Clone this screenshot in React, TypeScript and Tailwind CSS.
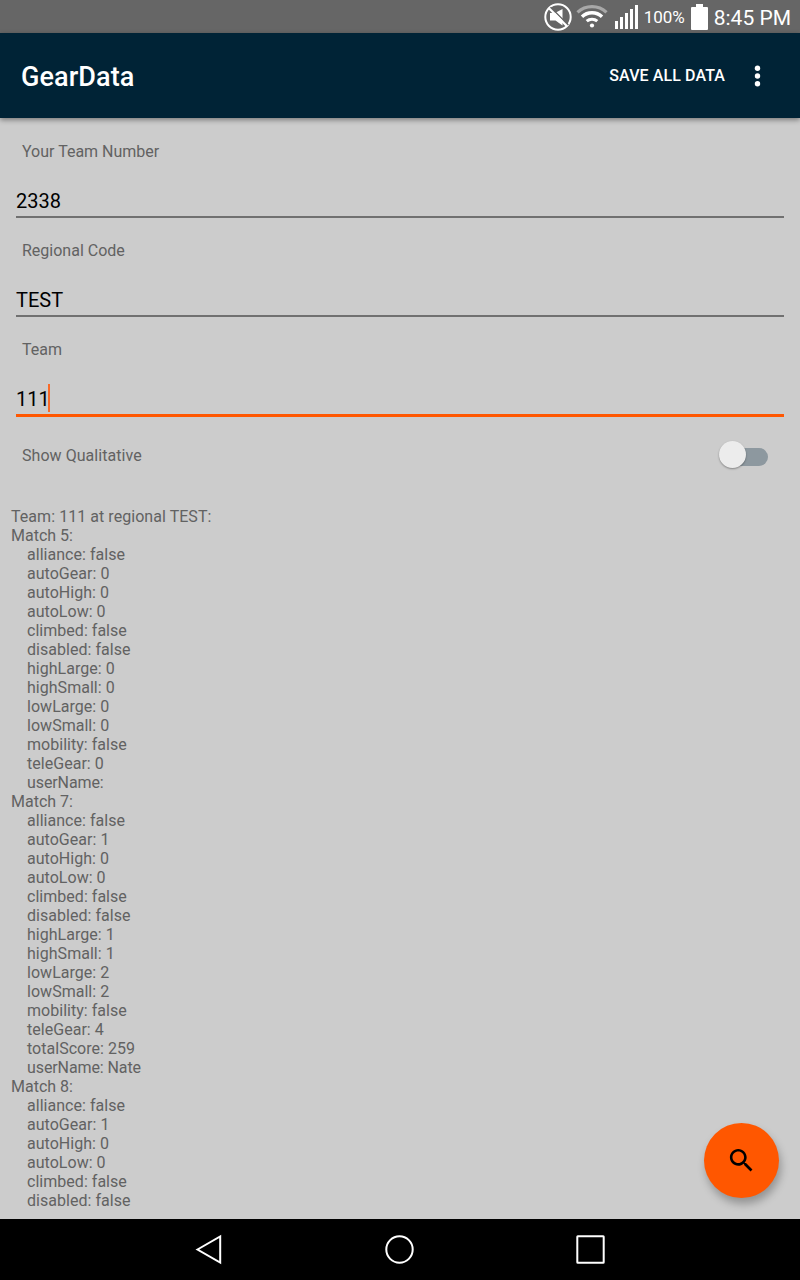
const fields = [
  { label: 'Your Team Number', value: '2338', focused: false },
  { label: 'Regional Code', value: 'TEST', focused: false },
  { label: 'Team', value: '111', focused: true },
];

const matches: { id: number; data: [string, string][] }[] = [
  {
    id: 5,
    data: [
      ['alliance', 'false'], ['autoGear', '0'], ['autoHigh', '0'], ['autoLow', '0'],
      ['climbed', 'false'], ['disabled', 'false'], ['highLarge', '0'], ['highSmall', '0'],
      ['lowLarge', '0'], ['lowSmall', '0'], ['mobility', 'false'], ['teleGear', '0'],
      ['userName', ''],
    ],
  },
  {
    id: 7,
    data: [
      ['alliance', 'false'], ['autoGear', '1'], ['autoHigh', '0'], ['autoLow', '0'],
      ['climbed', 'false'], ['disabled', 'false'], ['highLarge', '1'], ['highSmall', '1'],
      ['lowLarge', '2'], ['lowSmall', '2'], ['mobility', 'false'], ['teleGear', '4'],
      ['totalScore', '259'], ['userName', 'Nate'],
    ],
  },
  {
    id: 8,
    data: [
      ['alliance', 'false'], ['autoGear', '1'], ['autoHigh', '0'], ['autoLow', '0'],
      ['climbed', 'false'], ['disabled', 'false'],
    ],
  },
];

function StatusBar() {
  return (
    <div className="flex h-[33px] shrink-0 items-center justify-end bg-[#666666] pr-[9px] text-white">
      <svg className="mr-[4px] h-[28px] w-[28px]" viewBox="0 0 28 28" fill="none">
        <circle cx="14" cy="14" r="12.7" stroke="white" strokeWidth="2" />
        <path d="M6 10h5L18.500 6v16.500l-7-5H6z" fill="white" />
        <path d="M6.500 4.300L24.300 22" stroke="#666666" strokeWidth="1.600" />
        <path d="M5 5.200L22.800 23" stroke="white" strokeWidth="2.200" />
      </svg>
      <svg className="mr-[7px] h-[25px] w-[32px]" viewBox="0 0 32 25" fill="none">
        <path d="M1.500 8.300C9.500 .6 22.500 .6 30.500 8.300" stroke="#a8a8a8" strokeWidth="3.200" />
        <path d="M6 12.700c5.500-5.300 14.500-5.300 20 0" stroke="white" strokeWidth="3.400" />
        <path d="M10.700 17.200c3-2.700 7.600-2.700 10.600 0" stroke="white" strokeWidth="3" />
        <circle cx="16" cy="21.500" r="2.100" fill="white" />
      </svg>
      <svg className="mr-[6px] h-[25px] w-[23px]" viewBox="0 0 23 25" fill="white">
        <path d="M0 17h3v8H0zM5 13h3v12H5zM10 9h3v16h-3zM15 5h3v20h-3zM20 1h3v24h-3z" />
      </svg>
      <span className="mr-[5px] w-[42px] whitespace-nowrap pt-px text-[17px] leading-[32px]">100%</span>
      <svg className="mr-[6px] h-[26px] w-[17px]" viewBox="0 0 17 26" fill="white">
        <path d="M5 0h7v3h4q1 0 1 1v21q0 1-1 1H1q-1 0-1-1V4q0-1 1-1h4z" />
      </svg>
      <span className="whitespace-nowrap pt-[3px] text-[21px] leading-[30px]">8:45 PM</span>
    </div>
  );
}

function AppBar() {
  return (
    <header className="z-10 flex h-[85px] shrink-0 items-center bg-[#002336] pl-[21px] text-white shadow-[0_2px_5px_rgba(0,0,0,0.4)]">
      <h1 className="grow pt-[4px] text-[27px] font-medium tracking-[0.1px]">GearData</h1>
      <button className="text-[16px] font-medium tracking-[0.1px]">SAVE ALL DATA</button>
      <svg className="ml-[29px] mr-[39px] h-[22px] w-[7px]" viewBox="0 0 7 22" fill="white">
        <circle cx="3.500" cy="3.200" r="2.700" />
        <circle cx="3.500" cy="11" r="2.700" />
        <circle cx="3.500" cy="18.800" r="2.700" />
      </svg>
    </header>
  );
}

function NavBar() {
  return (
    <nav className="flex h-[61px] shrink-0 items-center justify-between bg-black pb-px pl-[195px] pr-[194px]">
      <svg className="h-[32px] w-[28px]" viewBox="0 0 28 32" fill="none" stroke="white" strokeWidth="2">
        <path d="M2.500 16.500L25.200 3.500v26z" />
      </svg>
      <svg className="h-[32px] w-[32px]" viewBox="0 0 32 32" fill="none" stroke="white" strokeWidth="2">
        <circle cx="16.500" cy="16.500" r="13.200" />
      </svg>
      <svg className="h-[32px] w-[32px]" viewBox="0 0 32 32" fill="none" stroke="white" strokeWidth="2">
        <rect x="3.300" y="3.300" width="26.400" height="26.400" rx=".5" />
      </svg>
    </nav>
  );
}

export default function App() {
  return (
    <div className="relative flex h-[1280px] w-[800px] flex-col overflow-hidden bg-[#cccccc] font-['Roboto',sans-serif]">
      <StatusBar />
      <AppBar />
      <main className="flex min-h-0 grow flex-col overflow-hidden pt-[24px] text-[16px] leading-[19px] text-[#626262]">
        {fields.map((f) => (
          <div key={f.label} className="mb-[23px] flex h-[76px] shrink-0 flex-col px-4">
            <label className="pl-[6px]">{f.label}</label>
            <div
              className={
                f.focused
                  ? 'flex h-[58px] shrink-0 items-end border-b-[3px] border-[#ff5700] pb-[2px] text-[20px] text-black'
                  : 'flex h-[57px] shrink-0 items-end border-b-2 border-[#707070] pb-[2px] text-[20px] text-black'
              }
            >
              <span className="leading-[26px]">{f.value}</span>
              {f.focused && <span className="-ml-[1.6px] h-[28px] w-[2px] bg-[#f96a28]" />}
            </div>
          </div>
        ))}
        <div className="flex h-[38px] shrink-0 -mt-[3px] items-center justify-between pl-[22px] pr-[32px]">
          <span className="tracking-[0.05px]">Show Qualitative</span>
          <div className="-mt-px flex h-[27px] w-[49px] items-center">
            <div className="z-[1] h-[27px] w-[27px] shrink-0 rounded-full bg-[#ececec] shadow-[0_1px_2px_rgba(0,0,0,0.35)]" />
            <div className="-ml-[14px] mt-[4px] h-[18px] w-[36px] rounded-r-full bg-[#8d989f]" />
          </div>
        </div>
        <div className="pl-[11px] pt-[33px]">
          <p className="tracking-[0.05px]">Team: 111 at regional TEST:</p>
          {matches.map((m) => (
            <section key={m.id}>
              <p>Match {m.id}:</p>
              {m.data.map(([name, value]) => (
                <p key={name} className={name === 'userName' ? 'pl-4 tracking-[-0.1px]' : 'pl-4 tracking-[0.03px]'}>
                  {name}: {value}
                </p>
              ))}
            </section>
          ))}
        </div>
      </main>
      <button className="absolute left-[704px] top-[1123px] flex h-[75px] w-[75px] items-center justify-center rounded-full bg-[#ff5700] shadow-[2px_6px_9px_rgba(0,0,0,0.28)]">
        <svg className="mr-px h-[31px] w-[31px]" viewBox="0 0 24 24" fill="black">
          <path d="M15.500 14h-.79l-.28-.27C15.410 12.590 16 11.110 16 9.500 16 5.910 13.090 3 9.500 3S3 5.910 3 9.500 5.910 16 9.500 16c1.610 0 3.090-.59 4.230-1.570l.27.28v.79l5 4.990L20.490 19l-4.990-5zm-6 0C7.010 14 5 11.990 5 9.500S7.010 5 9.500 5 14 7.010 14 9.500 11.990 14 9.500 14z" />
        </svg>
      </button>
      <NavBar />
    </div>
  );
}
